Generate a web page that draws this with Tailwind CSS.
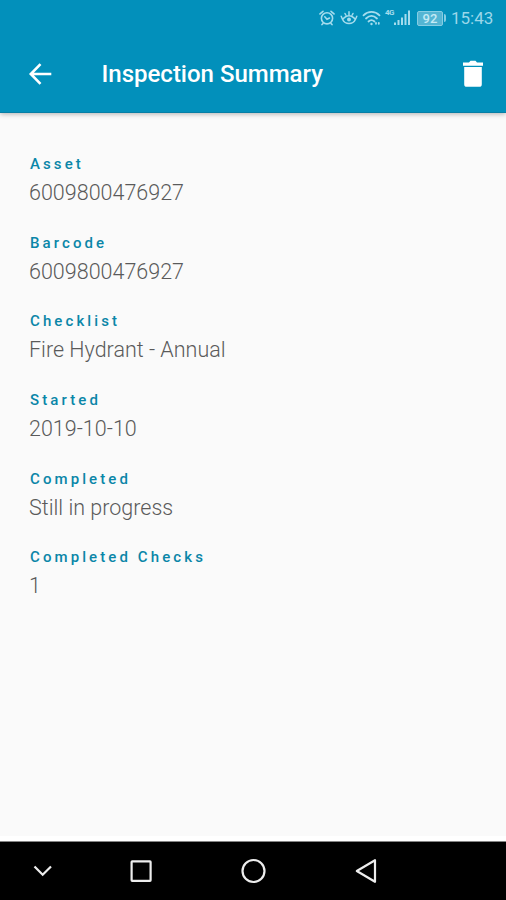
<!DOCTYPE html>
<html lang="en">
<head>
    <meta charset="UTF-8">
    <meta name="viewport" content="width=device-width, initial-scale=1.0">
    <title>Inspection Summary</title>
    <script src="https://cdn.jsdelivr.net/npm/@tailwindcss/browser@4"></script>
</head>
<body class="bg-[#fafafa] font-['Roboto',sans-serif]">
    <div class="w-[506px] h-[900px] flex flex-col overflow-hidden">

        <!-- Header -->
        <header class="h-[113px] shrink-0 bg-[#0290bb] border-b border-[#067ea5] shadow-[0_1px_5px_rgba(0,0,0,0.3)]">
            <!-- Status bar -->
            <div class="h-9 pl-[319px] flex items-center text-[#a5dced]">
                <svg class="w-4 h-4" viewBox="0 0 16 16" fill="none" stroke="currentColor" stroke-width="1.6" stroke-linecap="round">
                    <circle cx="8" cy="8.3" r="5.6"/>
                    <path d="M5.8 6.8L8 9.2l2.5-1.2M1 3.9l3-2.6M15 3.9l-3-2.6M4 13.4l-1 1.2M12 13.4l1 1.2"/>
                </svg>
                <svg class="w-[18px] h-4 ml-[5px]" viewBox="0 0 18 16" fill="none" stroke="currentColor" stroke-width="1.5" stroke-linecap="round">
                    <path d="M1.2 6.2L2.6 9.5C5 14.8 13 14.8 15.4 9.5L16.8 6.2M2.6 9.5C4.5 7 6.5 5.7 9 5.7s4.500 1.300 6.400 3.800M9 1.800v3.500M5 3.500l.8 1.500M13 3.500l-.8 1.500"/>
                    <circle cx="9" cy="9.4" r="2" fill="currentColor" stroke="none"/>
                </svg>
                <svg class="w-[19px] h-4 ml-[4px]" viewBox="0 0 19 16" fill="none" stroke="currentColor" stroke-width="1.8" stroke-linecap="round">
                    <path d="M1.5 5.3C6 .8 13 .8 17.5 5.3M4 8.5c3.500-3.300 7.500-3.300 11 0M6.5 11.5c2-1.800 4-1.800 6 0"/>
                    <circle cx="9.500" cy="14" r="1.2" fill="currentColor" stroke="none"/>
                    <path d="M14 12.8v1M16.8 12.8v1"/>
                </svg>
                <span class="w-[9px] h-4 ml-[4px] -mt-[3px] text-[8px] leading-[8px] font-bold tracking-[-0.6px]">4G</span>
                <svg class="w-[17px] h-4" viewBox="0 0 17 16" fill="currentColor">
                    <path d="M0 12.500h2V15H0zM3.500 10h2v5h-2zM7 7.500h2V15H7zM10.500 4h2v11h-2zM14 .500h2V15h-2z"/>
                </svg>
                <div class="ml-[6px] w-[26px] h-[15px] flex items-center justify-center rounded-[2px] border border-[#85cde3] bg-[#54b5d3] text-[13px] font-medium leading-none text-[#c4eaf5]">92</div>
                <div class="w-[2px] h-[8px] ml-px bg-[#85cde3] rounded-r-sm"></div>
                <span class="ml-[5px] text-[17px] leading-none text-[#9bd7ea]">15:43</span>
            </div>
            <!-- Title bar -->
            <div class="h-[76px] pl-[27px] pr-5 flex items-center">
                <svg class="w-[26px] h-[26px] text-white" viewBox="0 0 26 26" fill="none" stroke="currentColor" stroke-width="2.6">
                    <path d="M24.300 13H4M13.500 3.200L3.800 13l9.700 9.800"/>
                </svg>
                <h1 class="ml-[48.5px] text-[24px] leading-none font-medium text-white">Inspection Summary</h1>
                <svg class="ml-auto w-[26px] h-[28px] text-white" viewBox="0 0 26 28" fill="currentColor">
                    <path d="M3 2.500h6l1.500-1.700h5L17 2.500h6v3.200H3zM4.200 7h17.600v17.200a2.600 2.600 0 0 1-2.600 2.600H6.800a2.600 2.600 0 0 1-2.600-2.600z"/>
                </svg>
            </div>
        </header>

        <!-- Inspection details -->
        <main class="grow pt-[41px] pl-[29px] flex flex-col gap-[24.7px]">
            <div>
                <div class="pl-px text-[15px] leading-5 font-medium tracking-[3.1px] text-[#0a86a8]">Asset</div>
                <div class="mt-1 text-[21.5px] leading-[30px] font-light text-[#5a5a5a]">6009800476927</div>
            </div>
            <div>
                <div class="pl-px text-[15px] leading-5 font-medium tracking-[3.1px] text-[#0a86a8]">Barcode</div>
                <div class="mt-1 text-[21.5px] leading-[30px] font-light text-[#5a5a5a]">6009800476927</div>
            </div>
            <div>
                <div class="pl-px text-[15px] leading-5 font-medium tracking-[3.1px] text-[#0a86a8]">Checklist</div>
                <div class="mt-1 text-[21.5px] leading-[30px] font-light text-[#5a5a5a]">Fire Hydrant - Annual</div>
            </div>
            <div>
                <div class="pl-px text-[15px] leading-5 font-medium tracking-[3.1px] text-[#0a86a8]">Started</div>
                <div class="mt-1 text-[21.5px] leading-[30px] font-light text-[#5a5a5a]">2019-10-10</div>
            </div>
            <div>
                <div class="pl-px text-[15px] leading-5 font-medium tracking-[3.1px] text-[#0a86a8]">Completed</div>
                <div class="mt-1 text-[21.5px] leading-[30px] font-light text-[#5a5a5a]">Still in progress</div>
            </div>
            <div>
                <div class="pl-px text-[15px] leading-5 font-medium tracking-[3.1px] text-[#0a86a8]">Completed Checks</div>
                <div class="mt-1 text-[21.5px] leading-[30px] font-light text-[#5a5a5a]">1</div>
            </div>
        </main>

        <!-- Navigation bar -->
        <div class="h-[5px] shrink-0 bg-white"></div>
        <nav class="h-[59px] shrink-0 bg-black border-t border-[#858585] pl-[32px] flex items-center text-[#ededed]">
            <svg class="w-[22px] h-[28px]" viewBox="0 0 22 28" fill="none" stroke="currentColor" stroke-width="2.2">
                <path d="M2.500 9.500L10.700 17.700L19 9.500"/>
            </svg>
            <svg class="w-[28px] h-[28px] ml-[73px]" viewBox="0 0 28 28" fill="none" stroke="currentColor" stroke-width="2.2">
                <rect x="4.6" y="4.3" width="19" height="19.500" rx=".6"/>
            </svg>
            <svg class="w-[28px] h-[28px] ml-[84px]" viewBox="0 0 28 28" fill="none" stroke="currentColor" stroke-width="2.2">
                <circle cx="14.500" cy="14" r="11"/>
            </svg>
            <svg class="w-[28px] h-[28px] ml-[85px]" viewBox="0 0 28 28" fill="none" stroke="currentColor" stroke-width="2.2" stroke-linejoin="round">
                <path d="M4.800 14L23 3.200v21.600z"/>
            </svg>
        </nav>
    </div>
</body>
</html>
